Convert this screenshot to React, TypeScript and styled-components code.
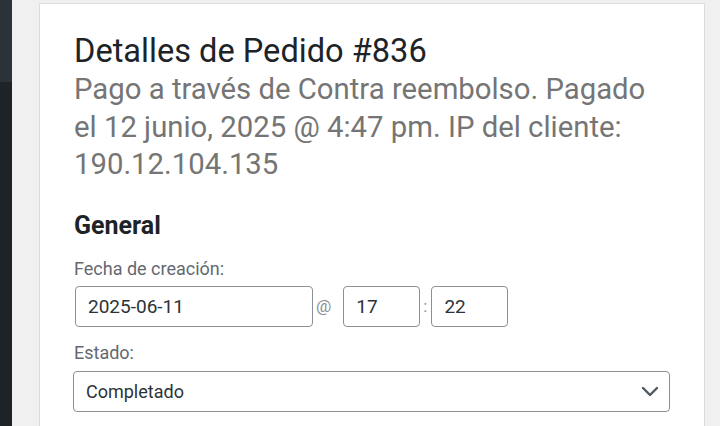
import styled, { createGlobalStyle } from 'styled-components'

const Global = createGlobalStyle`
  html, body {
    margin: 0;
    padding: 0;
    background: #f0f0f1;
    font-family: Roboto, "Liberation Sans", sans-serif;
    overflow: hidden;
  }
`

const Page = styled.div`
  display: flex;
  height: 426px;
`

const Sidebar = styled.div`
  width: 12px;
  flex-shrink: 0;
  display: flex;
  flex-direction: column;
  background: #1d2327;
`

const SidebarTop = styled.div`
  height: 82px;
  background: #2c3338;
`

const Main = styled.div`
  flex: 1;
  padding: 3px 15px 0 27px;
`

const Panel = styled.div`
  background: #fff;
  border: 1px solid #dcdcde;
  border-bottom: none;
  height: 100%;
  box-sizing: border-box;
  padding: 28px 34px 0 33px;
`

const Title = styled.h2`
  margin: 0;
  font-size: 32.6px;
  font-weight: 400;
  line-height: 39px;
  color: #1d2327;
  padding-left: 1px;
`

const Meta = styled.p`
  margin: 0;
  font-size: 29.3px;
  line-height: 37.5px;
  color: #757575;
  padding: 0 12px 0 1px;
`

const Heading = styled.h3`
  margin: 27px 0 0;
  font-size: 25px;
  font-weight: 700;
  line-height: 30px;
  color: #1d2327;
  padding-left: 1px;
`

const Label = styled.div<{ $gap: number }>`
  margin-top: ${p => p.$gap}px;
  font-size: 18px;
  line-height: 22px;
  color: #646970;
  padding-left: 1px;
`

const Row = styled.div`
  display: flex;
  align-items: center;
  margin-top: 6px;
  padding-left: 2px;
`

const Input = styled.div<{ $w: number }>`
  width: ${p => p.$w}px;
  height: 41px;
  box-sizing: border-box;
  border: 1px solid #8c8f94;
  border-radius: 4px;
  display: flex;
  align-items: center;
  padding: 0 12px;
  font-size: 19px;
  color: #2c3338;
`

const Sep = styled.span<{ $l: number; $r: number }>`
  font-size: 17px;
  color: #8c8f94;
  padding: 0 ${p => p.$r}px 0 ${p => p.$l}px;
`

const Select = styled.div`
  margin-top: 7px;
  height: 41px;
  box-sizing: border-box;
  border: 1px solid #8c8f94;
  border-radius: 4px;
  display: flex;
  align-items: center;
  justify-content: space-between;
  padding: 0 10px 0 12px;
  font-size: 18px;
  color: #2c3338;
`

const Chevron = () => (
  <svg width="18" height="18" viewBox="0 0 18 18" fill="none">
    <path d="M2 6l7 7 7-7" stroke="#50575e" strokeWidth="2.4" strokeLinecap="round" strokeLinejoin="round" />
  </svg>
)

export default function App() {
  return (
    <>
      <Global />
      <Page>
        <Sidebar>
          <SidebarTop />
        </Sidebar>
        <Main>
          <Panel>
            <Title>Detalles de Pedido #836</Title>
            <Meta>
              Pago a través de Contra reembolso. Pagado el 12 junio, 2025 @ 4:47 pm. IP del cliente: 190.12.104.135
            </Meta>
            <Heading>General</Heading>
            <Label $gap={17}>Fecha de creación:</Label>
            <Row>
              <Input $w={238}>2025-06-11</Input>
              <Sep $l={3} $r={12}>@</Sep>
              <Input $w={77}>17</Input>
              <Sep $l={3} $r={4}>:</Sep>
              <Input $w={77}>22</Input>
            </Row>
            <Label $gap={15}>Estado:</Label>
            <Select>
              Completado
              <Chevron />
            </Select>
          </Panel>
        </Main>
      </Page>
    </>
  )
}
